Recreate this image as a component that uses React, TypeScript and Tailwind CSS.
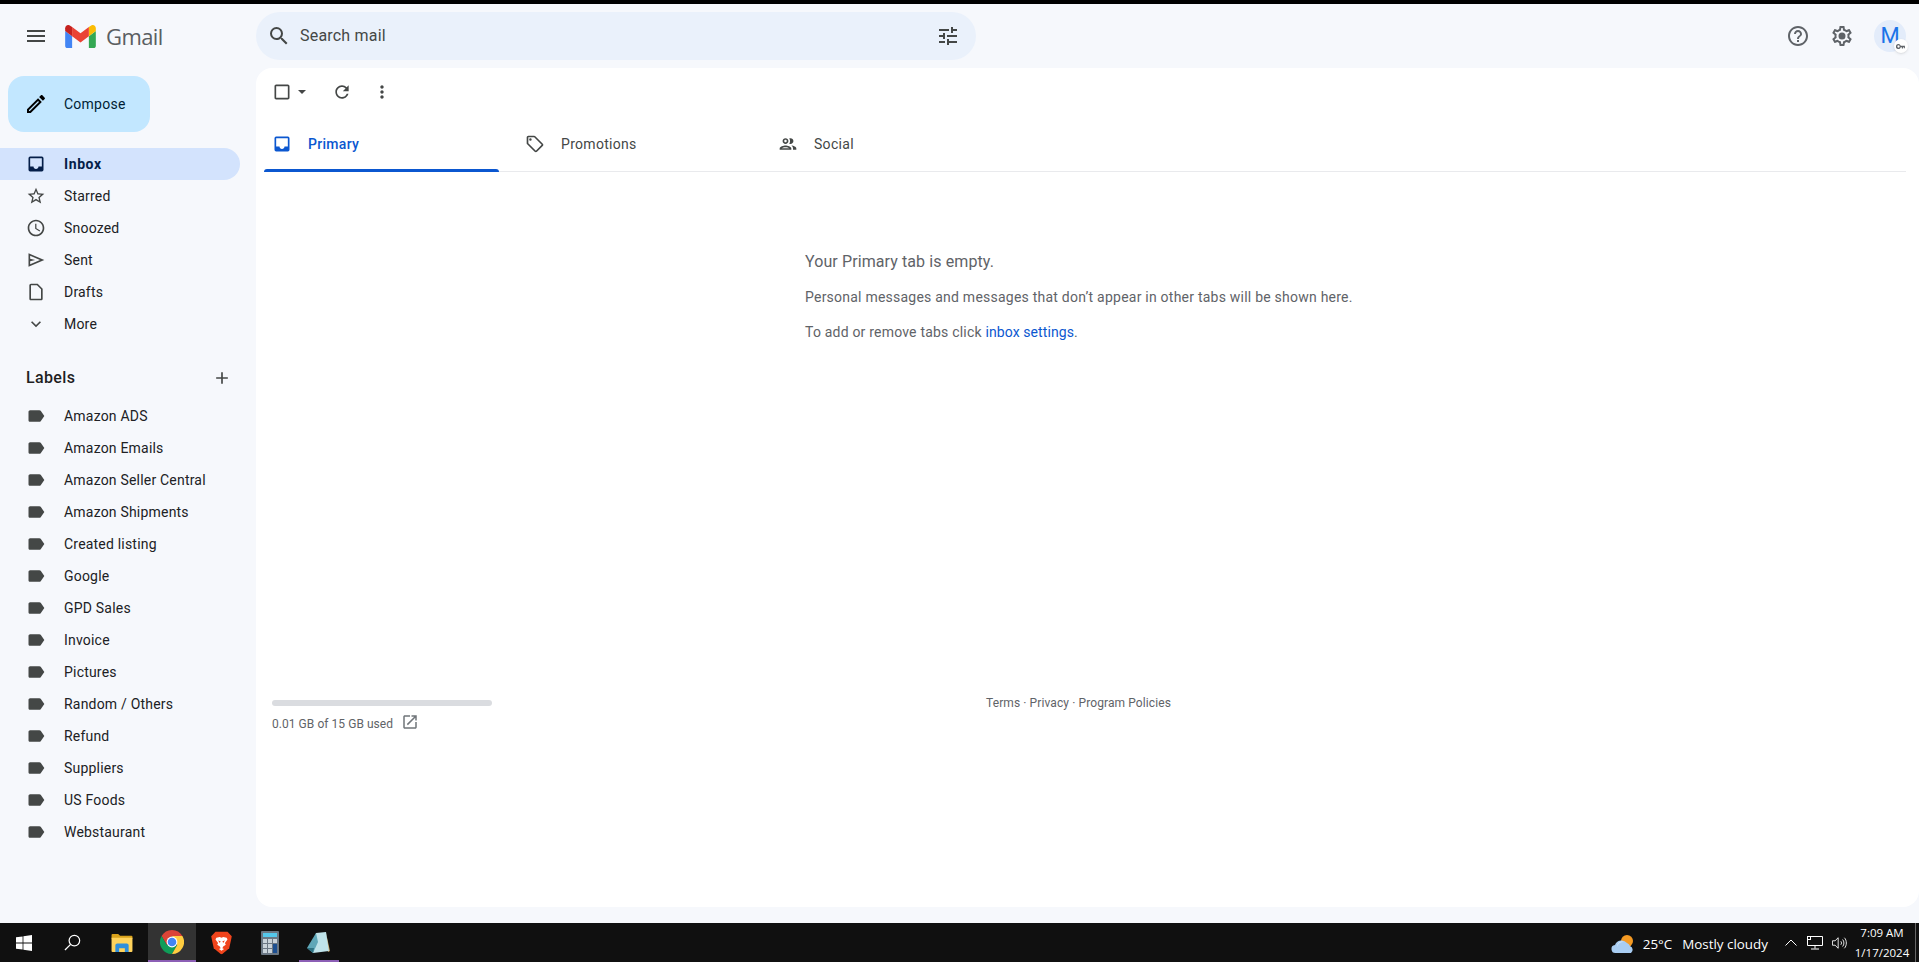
import type { ReactNode } from "react";

const P = {
  menu: "M3 18h18v-2H3v2zm0-5h18v-2H3v2zm0-7v2h18V6H3z",
  search: "M15.5 14h-.79l-.28-.27A6.471 6.471 0 0 0 16 9.5 6.5 6.5 0 1 0 9.5 16c1.61 0 3.09-.59 4.23-1.57l.27.28v.79l5 4.99L20.49 19l-4.99-5zm-6 0C7.01 14 5 11.99 5 9.5S7.01 5 9.5 5 14 7.01 14 9.5 11.99 14 9.5 14z",
  tune: "M3 17v2h6v-2H3zM3 5v2h10V5H3zm10 16v-2h8v-2h-8v-2h-2v6h2zM7 9v2H3v2h4v2h2V9H7zm14 4v-2H11v2h10zm-6-4h2V7h4V5h-4V3h-2v6z",
  help: "M11 18h2v-2h-2v2zm1-16C6.48 2 2 6.48 2 12s4.48 10 10 10 10-4.48 10-10S17.52 2 12 2zm0 18c-4.41 0-8-3.59-8-8s3.59-8 8-8 8 3.59 8 8-3.59 8-8 8zm0-14c-2.21 0-4 1.79-4 4h2c0-1.1.9-2 2-2s2 .9 2 2c0 2-3 1.75-3 5h2c0-2.25 3-2.5 3-5 0-2.21-1.79-4-4-4z",
  gear: "M19.43 12.98c.04-.32.07-.64.07-.98 0-.34-.03-.66-.07-.98l2.11-1.65c.19-.15.24-.42.12-.64l-2-3.46c-.09-.16-.26-.25-.44-.25-.06 0-.12.01-.17.03l-2.49 1c-.52-.4-1.08-.73-1.69-.98l-.38-2.65C14.46 2.18 14.25 2 14 2h-4c-.25 0-.46.18-.49.42l-.38 2.65c-.61.25-1.17.59-1.69.98l-2.49-1c-.06-.02-.12-.03-.18-.03-.17 0-.34.09-.43.25l-2 3.46c-.13.22-.07.49.12.64l2.11 1.65c-.04.32-.07.65-.07.98 0 .33.03.66.07.98l-2.11 1.65c-.19.15-.24.42-.12.64l2 3.46c.09.16.26.25.44.25.06 0 .12-.01.17-.03l2.49-1c.52.4 1.08.73 1.69.98l.38 2.65c.03.24.24.42.49.42h4c.25 0 .46-.18.49-.42l.38-2.65c.61-.25 1.17-.59 1.69-.98l2.49 1c.06.02.12.03.18.03.17 0 .34-.09.43-.25l2-3.46c.12-.22.07-.49-.12-.64l-2.11-1.65zm-1.98-1.71c.04.31.05.52.05.73 0 .21-.02.43-.05.73l-.14 1.13.89.7 1.08.84-.7 1.21-1.27-.51-1.04-.42-.9.68c-.43.32-.84.56-1.25.73l-1.06.43-.16 1.13-.2 1.35h-1.4l-.19-1.35-.16-1.13-1.06-.43c-.43-.18-.83-.41-1.23-.71l-.91-.7-1.06.43-1.27.51-.7-1.21 1.08-.84.89-.7-.14-1.13c-.03-.31-.05-.54-.05-.74s.02-.43.05-.73l.14-1.13-.89-.7-1.08-.84.7-1.21 1.27.51 1.04.42.9-.68c.43-.32.84-.56 1.25-.73l1.06-.43.16-1.13.2-1.35h1.39l.19 1.35.16 1.13 1.06.43c.43.18.83.41 1.23.71l.91.7 1.06-.43 1.27-.51.7 1.21-1.07.85-.89.7.14 1.13zM12 8.5a3.5 3.5 0 1 0 0 7 3.5 3.5 0 0 0 0-7z",
  edit: "M3 17.25V21h3.75L17.81 9.94l-3.75-3.75L3 17.25zM5.92 19H5v-.92l9.06-9.06.92.92L5.92 19zM20.71 5.63l-2.34-2.34c-.2-.2-.45-.29-.71-.29s-.51.1-.7.29l-1.83 1.83 3.75 3.75 1.83-1.83c.39-.39.39-1.02 0-1.41z",
  inbox: "M19 3H5a2 2 0 0 0-2 2v14a2 2 0 0 0 2 2h14a2 2 0 0 0 2-2V5a2 2 0 0 0-2-2zm0 12h-4c0 1.66-1.35 3-3 3s-3-1.34-3-3H5V5h14v10z",
  star: "M22 9.24l-7.19-.62L12 2 9.19 8.63 2 9.24l5.46 4.73L5.82 21 12 17.27 18.18 21l-1.63-7.03L22 9.24zM12 15.4l-3.76 2.27 1-4.28-3.32-2.88 4.38-.38L12 6.1l1.71 4.04 4.38.38-3.32 2.88 1 4.28L12 15.4z",
  clock: "M11.99 2C6.47 2 2 6.48 2 12s4.47 10 9.99 10C17.52 22 22 17.52 22 12S17.52 2 11.99 2zM12 20c-4.42 0-8-3.58-8-8s3.58-8 8-8 8 3.58 8 8-3.58 8-8 8zm.5-13H11v6l5.25 3.15.75-1.23-4.5-2.67z",
  send: "M3 20V4l19 8-19 8zm2-3 11.85-5L5 7v3.5l6 1.5-6 1.5V17z",
  draft: "M6 2c-1.1 0-2 .9-2 2v16c0 1.1.9 2 2 2h12c1.1 0 2-.9 2-2V8l-6-6H6zm0 18V4h7.17L18 8.83V20H6z",
  chevron: "M16.59 8.59L12 13.17 7.41 8.59 6 10l6 6 6-6z",
  label: "M17.63 5.84C17.27 5.33 16.67 5 16 5L5 5.01C3.9 5.01 3 5.9 3 7v10c0 1.1.9 1.99 2 1.99L16 19c.67 0 1.27-.33 1.63-.84L22 12l-4.37-6.16z",
  plus: "M19 13h-6v6h-2v-6H5v-2h6V5h2v6h6v2z",
  tag: "M21.41 11.58l-9-9C12.05 2.22 11.55 2 11 2H4c-1.1 0-2 .9-2 2v7c0 .55.22 1.05.59 1.42l9 9c.36.36.86.58 1.41.58s1.05-.22 1.41-.59l7-7c.37-.36.59-.86.59-1.41s-.23-1.06-.59-1.42zM13 20.01L4 11V4h7v-.01l9 9-7 7.02zM6.5 5a1.5 1.5 0 1 0 0 3 1.5 1.5 0 0 0 0-3z",
  people: "M9 13.75c-2.34 0-7 1.17-7 3.5V19h14v-1.75c0-2.33-4.66-3.5-7-3.5zM4.34 17c.84-.58 2.87-1.25 4.66-1.25s3.82.67 4.66 1.25H4.34zM9 12c1.93 0 3.5-1.57 3.5-3.5S10.93 5 9 5 5.5 6.57 5.5 8.5 7.07 12 9 12zm0-5c.83 0 1.5.67 1.5 1.5S9.83 10 9 10s-1.5-.67-1.5-1.5S8.17 7 9 7zm7.04 6.81c1.16.84 1.96 1.96 1.96 3.44V19h4v-1.75c0-2.02-3.5-3.17-5.96-3.44zM15 12c1.93 0 3.5-1.57 3.5-3.5S16.93 5 15 5c-.54 0-1.04.13-1.5.35.63.89 1 1.98 1 3.15s-.37 2.26-1 3.15c.46.22.96.35 1.5.35z",
  refresh: "M17.65 6.35C16.2 4.9 14.21 4 12 4c-4.42 0-7.99 3.58-7.99 8s3.57 8 7.99 8c3.73 0 6.84-2.55 7.73-6h-2.08c-.82 2.33-3.04 4-5.65 4-3.31 0-6-2.69-6-6s2.69-6 6-6c1.66 0 3.14.69 4.22 1.78L13 11h7V4l-2.35 2.35z",
  dots: "M12 8c1.1 0 2-.9 2-2s-.9-2-2-2-2 .9-2 2 .9 2 2 2zm0 2c-1.1 0-2 .9-2 2s.9 2 2 2 2-.9 2-2-.9-2-2-2zm0 6c-1.1 0-2 .9-2 2s.9 2 2 2 2-.9 2-2-.9-2-2-2z",
  checkbox: "M19 5v14H5V5h14m0-2H5c-1.1 0-2 .9-2 2v14c0 1.1.9 2 2 2h14c1.1 0 2-.9 2-2V5c0-1.1-.9-2-2-2z",
  open: "M19 19H5V5h7V3H5c-1.11 0-2 .9-2 2v14c0 1.1.89 2 2 2h14c1.1 0 2-.9 2-2v-7h-2v7zM14 3v2h3.59l-9.83 9.83 1.41 1.41L19 6.41V10h2V3h-7z",
};

const Icon = ({ d, className }: { d: string; className: string }) => (
  <svg viewBox="0 0 24 24" fill="currentColor" fillRule="evenodd" className={className}>
    <path d={d} />
  </svg>
);

const mainNav = [
  { name: "Starred", d: P.star },
  { name: "Snoozed", d: P.clock },
  { name: "Sent", d: P.send },
  { name: "Drafts", d: P.draft },
  { name: "More", d: P.chevron },
];

const labels = [
  "Amazon ADS",
  "Amazon Emails",
  "Amazon Seller Central",
  "Amazon Shipments",
  "Created listing",
  "Google",
  "GPD Sales",
  "Invoice",
  "Pictures",
  "Random / Others",
  "Refund",
  "Suppliers",
  "US Foods",
  "Webstaurant",
];

const NavRow = ({ d, children }: { d: string; children: ReactNode }) => (
  <div className="flex h-8 w-[240px] items-center pl-[26px] text-[14px] tracking-[0.2px] text-[#202124]">
    <Icon d={d} className="mr-[18px] h-5 w-5 shrink-0 text-[#444746]" />
    <span>{children}</span>
  </div>
);

const GmailLogo = () => (
  <svg viewBox="52 42 88 66" className="h-[23px] w-[31px]">
    <path fill="#4285f4" d="M58 108h14V74L52 59v43c0 3.32 2.69 6 6 6" />
    <path fill="#34a853" d="M120 108h14c3.32 0 6-2.69 6-6V59l-20 15" />
    <path fill="#fbbc04" d="M120 48v26l20-15v-8c0-7.42-8.47-11.65-14.4-7.2" />
    <path fill="#ea4335" d="M72 74V48l24 18 24-18v26L96 92" />
    <path fill="#c5221f" d="M52 51v8l20 15V48l-5.6-4.2c-5.94-4.45-14.4-.22-14.4 7.2" />
  </svg>
);

const ChromeIcon = () => (
  <svg viewBox="0 0 24 24" className="h-6 w-6">
    <path fill="#db4437" d="M12 0a12 12 0 0 0-10.4 6l5.2 9L12 6h10.4A12 12 0 0 0 12 0z" />
    <path fill="#0f9d58" d="M1.6 6A12 12 0 0 0 12 24l5.2-9H6.8z" />
    <path fill="#ffcd40" d="M22.4 6H12l5.2 9L12 24A12 12 0 0 0 22.4 6z" />
    <circle cx="12" cy="12" r="5.4" fill="#fff" />
    <circle cx="12" cy="12" r="4.3" fill="#4285f4" />
  </svg>
);

const BraveIcon = () => (
  <svg viewBox="0 0 24 28" className="h-[24px] w-[21px]">
    <path fill="#f0441c" d="M5 1h14l3 3 2 2-1 5-2 9-7 6-2 1-2-1-7-6-2-9-1-5 2-2z" />
    <path fill="#fff" d="M6 8l4-1 2 1 2-1 4 1 1 2-3 4 1 2-3 2-1 2 2 1-3 2-3-2 2-1-1-2-3-2 1-2-3-4z" />
    <path fill="#f0441c" d="M8 11l3 1-1 2zM16 11l-3 1 1 2z" />
  </svg>
);

const TaskButton = ({ children, className }: { children: ReactNode; className: string }) => (
  <div className={"flex h-full items-center justify-center " + className}>{children}</div>
);

export default function App() {
  return (
    <div className="flex h-screen flex-col overflow-hidden bg-[#f6f8fc] font-['Roboto',sans-serif]">
      <div className="h-1 shrink-0 bg-black" />

      <header className="flex h-16 shrink-0 items-center">
        <div className="flex w-[256px] items-center pl-6">
          <Icon d={P.menu} className="h-6 w-6 text-[#444746]" />
          <div className="ml-[17px] flex items-center">
            <GmailLogo />
            <span className="ml-[10px] font-['Open_Sans',sans-serif] text-[22px] leading-none tracking-[-0.6px] text-[#5b5e62]">
              Gmail
            </span>
          </div>
        </div>
        <div className="flex h-12 w-[720px] items-center rounded-3xl bg-[#eaf1fb] pl-[11px] pr-[8px]">
          <Icon d={P.search} className="h-6 w-6 text-[#444746]" />
          <span className="ml-[9px] flex-1 text-[16px] tracking-[0.2px] text-[#444746]">Search mail</span>
          <Icon d={P.tune} className="mr-[8px] h-6 w-6 text-[#444746]" />
        </div>
        <div className="ml-auto flex items-center pr-[13px]">
          <Icon d={P.help} className="h-6 w-6 text-[#5f6368]" />
          <Icon d={P.gear} className="ml-5 h-6 w-6 text-[#5f6368]" />
          <div className="relative ml-5 flex h-8 w-8 items-center justify-center rounded-full bg-[#e3ecfa] text-[22px] leading-none text-[#1a73e8]">
            M
            <div className="absolute -bottom-[1px] -right-[2px] flex h-[14px] w-[14px] items-center justify-center rounded-full bg-white shadow-sm">
              <svg viewBox="0 0 12 6" className="h-[5px] w-[10px]" fill="#5f6368">
                <path d="M3 0a3 3 0 1 0 2.7 4H7v1.5h1.4V4h1v1h1.3V2H5.7A3 3 0 0 0 3 0zm0 1.6a1.4 1.4 0 1 1 0 2.8 1.4 1.4 0 0 1 0-2.8z" />
              </svg>
            </div>
          </div>
        </div>
      </header>

      <div className="flex min-h-0 flex-1">
        <aside className="w-[256px] shrink-0 pt-2">
          <div className="ml-2 flex h-14 w-[142px] items-center rounded-2xl bg-[#c2e7ff] pl-4 text-[14px] tracking-[0.25px] text-[#001d35]">
            <Icon d={P.edit} className="mr-4 h-6 w-6 text-black" />
            Compose
          </div>

          <nav className="mt-4">
            <div className="flex h-8 w-[240px] items-center rounded-r-full bg-[#d3e3fd] pl-[26px] text-[14px] font-bold tracking-[0.6px] text-[#041e49]">
              <Icon d={P.inbox} className="mr-[18px] h-5 w-5 text-[#041e49]" />
              Inbox
            </div>
            {mainNav.map((item) => (
              <NavRow key={item.name} d={item.d}>
                {item.name}
              </NavRow>
            ))}
          </nav>

          <div className="mt-[22px] flex h-8 w-[240px] items-center justify-between pl-[26px] pr-[8px] text-[16px] font-medium tracking-[0.35px] text-[#1f1f1f]">
            <span>Labels</span>
            <Icon d={P.plus} className="h-5 w-5 text-[#444746]" />
          </div>

          <div className="mt-[6px]">
            {labels.map((name) => (
              <NavRow key={name} d={P.label}>
                {name}
              </NavRow>
            ))}
          </div>
        </aside>

        <main className="mb-4 flex min-w-0 flex-1 flex-col rounded-2xl bg-white">
          <div className="flex h-12 shrink-0 items-center pl-[16px] text-[#444746]">
            <Icon d={P.checkbox} className="h-5 w-5" />
            <svg viewBox="0 0 10 5" className="ml-[6px] h-[4px] w-[8px]" fill="currentColor">
              <path d="M0 0h10L5 5z" />
            </svg>
            <Icon d={P.refresh} className="ml-[26px] h-5 w-5" />
            <Icon d={P.dots} className="ml-[20px] h-5 w-5" />
          </div>

          <div className="ml-2 mr-[13px] flex h-14 shrink-0 border-b border-[#e9eaed] text-[14px] tracking-[0.3px]">
            <div className="relative flex w-[253px] items-center pl-2 font-medium text-[#0b57d0]">
              <Icon d={P.inbox} className="mr-4 h-5 w-5" />
              <span className="mt-[2px]">Primary</span>
              <div className="absolute -bottom-px left-0 h-[3px] w-[235px] rounded-t-sm bg-[#0b57d0]" />
            </div>
            <div className="flex w-[253px] items-center pl-2 text-[#444746]">
              <Icon d={P.tag} className="mr-4 h-5 w-5" />
              <span className="mt-[2px]">Promotions</span>
            </div>
            <div className="flex w-[253px] items-center pl-2 text-[#444746]">
              <Icon d={P.people} className="mr-4 h-5 w-5" />
              <span className="mt-[2px]">Social</span>
            </div>
          </div>

          <div className="ml-[549px] mt-[79px] text-[#5f6368]">
            <p className="text-[16px] leading-[22px] tracking-[0.1px]">Your Primary tab is empty.</p>
            <p className="mt-[13px] text-[14px] leading-[22px] tracking-[0.23px]">
              Personal messages and messages that don’t appear in other tabs will be shown here.
            </p>
            <p className="mt-[13px] text-[14px] leading-[22px] tracking-[0.2px]">
              To add or remove tabs click <span className="tracking-[0.1px] text-[#0b57d0]">inbox settings</span>.
            </p>
          </div>

          <div className="mt-[357px] flex pl-4 text-[12px] text-[#5f6368]">
            <div className="w-[220px]">
              <div className="h-[6px] rounded-full bg-[#dadce0]" />
              <div className="mt-[9px] flex items-center">
                <span className="tracking-[0.05px]">0.01 GB of 15 GB used</span>
                <Icon d={P.open} className="ml-[8px] h-[18px] w-[18px] -translate-y-[2px] text-[#70757a]" />
              </div>
            </div>
            <div className="-mt-[6px] ml-[494px] tracking-[0.1px]">Terms · Privacy · Program Policies</div>
          </div>
        </main>
      </div>

      <footer className="flex h-[39px] shrink-0 items-center bg-[#101010] font-['Open_Sans',sans-serif] text-white">
        <TaskButton className="w-12">
          <svg viewBox="0 0 16 16" className="h-[16px] w-[16px]" fill="#fff">
            <path d="M0 2.3 6.6 1.4v6.2H0zM7.400 1.300 16 0v7.600H7.400zM0 8.400h6.600v6.200L0 13.700zM7.400 8.400H16V16l-8.600-1.300z" />
          </svg>
        </TaskButton>
        <TaskButton className="w-12">
          <svg viewBox="0 0 18 18" className="h-[17px] w-[17px]" fill="none" stroke="#fff" strokeWidth="1.3">
            <circle cx="11" cy="7" r="5.6" />
            <path d="M7 11 1 17" />
          </svg>
        </TaskButton>
        <TaskButton className="ml-px w-[50px]">
          <svg viewBox="0 0 22 20" className="h-[19px] w-[22px]">
            <path fill="#d9a21b" d="M0 2a1 1 0 0 1 1-1h6l2 2h12a1 1 0 0 1 1 1v2H0z" />
            <path fill="#ffd35c" d="M0 5h22v14a1 1 0 0 1-1 1H1a1 1 0 0 1-1-1z" />
            <path fill="#2f8fdc" d="M4 20v-7a2 2 0 0 1 2-2h10a2 2 0 0 1 2 2v7h-4v-4H8v4z" />
          </svg>
        </TaskButton>
        <TaskButton className="ml-px w-12 border-b-2 border-[#8c5fb5] bg-[#333333]">
          <ChromeIcon />
        </TaskButton>
        <TaskButton className="ml-px w-12">
          <BraveIcon />
        </TaskButton>
        <TaskButton className="ml-px w-12">
          <svg viewBox="0 0 18 24" className="h-6 w-[18px]">
            <rect width="18" height="24" rx="1" fill="#6b7784" />
            <rect x="2" y="2" width="14" height="4" fill="#55c8ec" />
            <path fill="#c9d2da" d="M2 8h4v4H2zM7 8h4v4H7zM12 8h4v4h-4zM2 13h4v4H2zM7 13h4v4H7zM2 18h4v4H2zM7 18h4v4H7z" />
            <rect x="12" y="13" width="4" height="9" fill="#1d4f91" />
          </svg>
        </TaskButton>
        <TaskButton className="relative ml-px w-12">
          <svg viewBox="0 0 24 24" className="h-6 w-6">
            <path fill="#c9a667" d="M19 2 23 20l-2 1z" />
            <path fill="#bfe3ea" d="M9 2 19 1l3 19-16 2z" />
            <path fill="#5fa7b8" d="M9 2 0 17l6 5 5-11z" />
            <path fill="#2f7282" d="M0 17l6 5 1-5z" />
          </svg>
          <div className="absolute bottom-0 left-1 right-[4px] h-[2px] bg-[#8c5fb5]" />
        </TaskButton>

        <div className="ml-auto flex h-full items-center text-[13.4px]">
          <svg viewBox="0 0 24 20" className="mt-[3px] h-[20px] w-6">
            <circle cx="16" cy="7" r="6" fill="#f59a23" />
            <path fill="#a9cdf2" d="M5 19a4 4 0 0 1-1-8 7 7 0 0 1 12-2 5 5 0 0 1 3 3 4 4 0 0 1 1 7z" />
            <path fill="#dcecfb" d="M6 13a5 5 0 0 1 7-5 6 6 0 0 0-7 5z" />
          </svg>
          <span className="ml-[8px] mt-[3px]">25°C</span>
          <span className="ml-[10px] mt-[3px]">Mostly cloudy</span>
          <svg viewBox="0 0 12 7" className="ml-[17px] h-[7px] w-[12px]" fill="none" stroke="#fff" strokeWidth="1">
            <path d="M.5 6.500 6 1l5.500 5.500" />
          </svg>
          <svg viewBox="0 0 16 14" className="ml-[10px] h-[14px] w-[16px]" fill="none" stroke="#fff" strokeWidth="1">
            <path d="M4 .5h11.500v9H.5V4M8 9.500v3M4 13h8" />
            <rect x=".5" y=".5" width="3" height="3" />
          </svg>
          <svg viewBox="0 0 17 14" className="ml-[9px] h-[14px] w-[15px]" fill="none" stroke="#fff" strokeWidth="1">
            <path d="M.5 4.500h3L7 1v12L3.500 9.500h-3zM10 5c1 1 1 3 0 4M12 3c2 2 2 6 0 8M14 1c3 3 3 9 0 12" />
          </svg>
          <div className="ml-[5px] flex w-[60px] flex-col items-center text-[11.5px] leading-[20px]">
            <span>7:09 AM</span>
            <span>1/17/2024</span>
          </div>
          <div className="ml-[3px] mr-[3px] h-full w-px bg-[#666666]" />
        </div>
      </footer>
    </div>
  );
}
